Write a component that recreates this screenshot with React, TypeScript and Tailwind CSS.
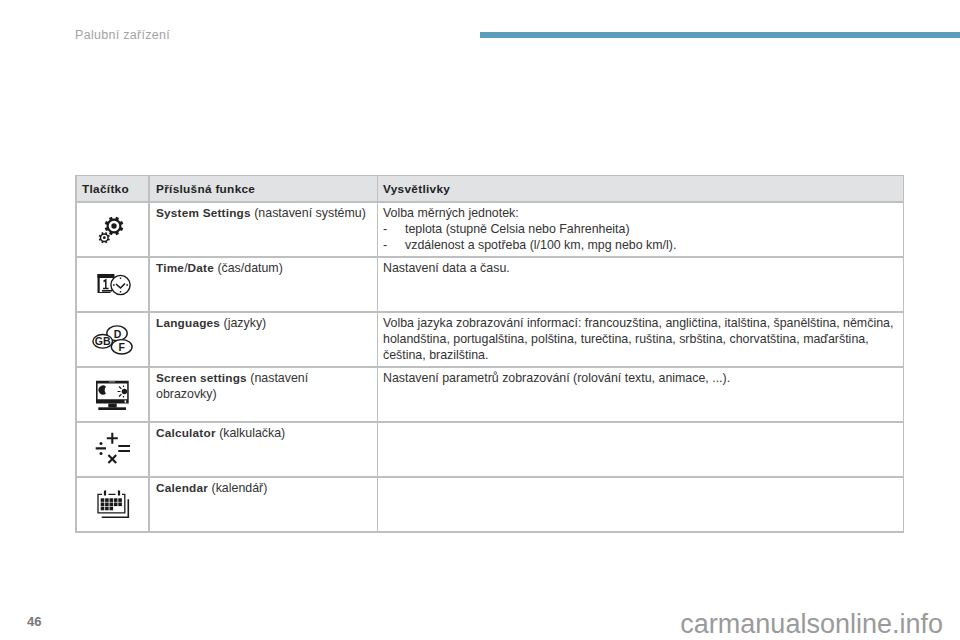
const boldCls = "font-bold text-[11.8px] tracking-[0.2px]";

const rows = [
  {
    icon: <GearsIcon />,
    fn: <><b className={boldCls}>System Settings</b> (nastavení systému)</>,
    desc: (
      <>
        <div>Volba měrných jednotek:</div>
        <div className="flex"><span className="w-[22px]">-</span><span>teplota (stupně Celsia nebo Fahrenheita)</span></div>
        <div className="flex"><span className="w-[22px]">-</span><span>vzdálenost a spotřeba (l/100 km, mpg nebo km/l).</span></div>
      </>
    ),
  },
  {
    icon: <ClockIcon />,
    fn: <><b className={boldCls}>Time</b>/<b className={boldCls}>Date</b> (čas/datum)</>,
    desc: <div>Nastavení data a času.</div>,
  },
  {
    icon: <LangIcon />,
    fn: <><b className={boldCls}>Languages</b> (jazyky)</>,
    desc: (
      <>
        <div>Volba jazyka zobrazování informací: francouzština, angličtina, italština, španělština, němčina,</div>
        <div>holandština, portugalština, polština, turečtina, ruština, srbština, chorvatština, maďarština,</div>
        <div>čeština, brazilština.</div>
      </>
    ),
  },
  {
    icon: <ScreenIcon />,
    fn: <><b className={boldCls}>Screen settings</b> (nastavení<br />obrazovky)</>,
    desc: <div>Nastavení parametrů zobrazování (rolování textu, animace, ...).</div>,
  },
  {
    icon: <CalcIcon />,
    fn: <><b className={boldCls}>Calculator</b> (kalkulačka)</>,
    desc: null,
  },
  {
    icon: <CalendarIcon />,
    fn: <><b className={boldCls}>Calendar</b> (kalendář)</>,
    desc: null,
  },
];

const ink = "#1a1a1a";

// all icons share a 60x50 box
function GearsIcon() {
  const teeth = [0, 45, 90, 135, 180, 225, 270, 315];
  return (
    <svg width="60" height="50" viewBox="0 0 60 50" fill="none" stroke={ink}>
      <circle cx="34" cy="21" r="6.4" strokeWidth="2.2" />
      <circle cx="34" cy="21" r="2.7" fill={ink} stroke="none" />
      {teeth.map((a) => (
        <rect key={a} x="32.4" y="11.6" width="3.2" height="3" fill={ink} stroke="none" transform={`rotate(${a + 22.5} 34 21)`} />
      ))}
      <circle cx="24.3" cy="32.7" r="3.8" strokeWidth="1.5" />
      <circle cx="24.3" cy="32.7" r="1.4" fill={ink} stroke="none" />
      {teeth.map((a) => (
        <rect key={a} x="23.4" y="27" width="1.8" height="1.6" fill={ink} stroke="none" transform={`rotate(${a + 22.5} 24.3 32.7)`} />
      ))}
    </svg>
  );
}

function ClockIcon() {
  return (
    <svg width="60" height="50" viewBox="0 0 60 50" fill="none" stroke={ink}>
      <rect x="17.5" y="14" width="17" height="4" fill={ink} stroke="none" />
      <rect x="17.5" y="14" width="2.2" height="19" fill={ink} stroke="none" />
      <rect x="22" y="30" width="10" height="1.6" fill={ink} stroke="none" />
      <rect x="19.5" y="32" width="11" height="1" fill={ink} stroke="none" />
      <path d="M23.5 21.5 25.8 20v8.6M23 28.6h5.6" strokeWidth="1.5" />
      <circle cx="40.5" cy="25" r="9.6" fill="#fff" strokeWidth="1.4" />
      <path d="M36 24 40.5 28 45 23.5" strokeWidth="1.6" />
      <path d="M40.5 17.5v1.6M40.5 30.9v1.6M33 25h1.6M46.4 25h1.6" strokeWidth="1.4" />
    </svg>
  );
}

function LangIcon() {
  return (
    <svg width="60" height="50" viewBox="0 0 60 50" fill="#fff" stroke={ink} strokeWidth="1.4">
      <ellipse cx="37" cy="18.3" rx="10.2" ry="7.4" />
      <ellipse cx="22.7" cy="26.3" rx="9.8" ry="6.8" />
      <ellipse cx="41.7" cy="31.8" rx="10.4" ry="7.2" />
      <g fill={ink} stroke="none" fontFamily="'Liberation Sans', sans-serif" fontWeight="700" fontSize="10.5" textAnchor="middle">
        <text x="37.5" y="22.5">D</text>
        <text x="22.7" y="30">GB</text>
        <text x="41.7" y="36">F</text>
      </g>
    </svg>
  );
}

function ScreenIcon() {
  return (
    <svg width="60" height="50" viewBox="0 0 60 50">
      <path fillRule="evenodd" d="M16 10.7h32.7V33.5H16zM17.6 13.4V29.3H47.2V13.4z" fill={ink} />
      <rect x="29" y="11.4" width="6" height="1" fill="#999" />
      <rect x="28.3" y="33.5" width="8.4" height="4" fill={ink} />
      <rect x="18.3" y="37.3" width="27.7" height="2.7" fill={ink} />
      <path d="M26 16.4a4.6 4.6 0 1 0 0 7.2 6 6 0 0 1 0-7.2z" fill={ink} />
      <circle cx="44.4" cy="21.5" r="2.7" fill={ink} />
      <path d="M37.5 21.5h3M39 16.5l2.4 2.2M39 26.5l2.4-2.2M43.5 15.5v1.6M43.5 26v1.6" stroke={ink} strokeWidth="1.2" />
      <rect x="44.6" y="30.4" width="1.6" height="2.2" fill="#fff" />
    </svg>
  );
}

function CalcIcon() {
  return (
    <svg width="60" height="50" viewBox="0 0 60 50" stroke={ink} strokeWidth="2.1" fill="none">
      <path d="M15.7 23.4H26M26.8 13.3h11M32.3 7.8v11M38.3 21h11.7M38.3 26h11.7M28.4 30.1l7.8 7.8M36.2 30.1l-7.8 7.8" />
      <circle cx="21" cy="18.4" r="1.5" fill={ink} stroke="none" />
      <circle cx="21" cy="28.4" r="1.5" fill={ink} stroke="none" />
    </svg>
  );
}

function CalendarIcon() {
  const cells = [];
  for (let y = 0; y < 3; y++) {
    for (let x = 0; x < 5; x++) {
      if (y === 2 && x > 2) continue;
      cells.push(<rect key={`${x}-${y}`} x={20.7 + x * 4.4} y={18.3 + y * 4.2} width="3.6" height="3.6" fill={ink} stroke="none" />);
    }
  }
  return (
    <svg width="60" height="50" viewBox="0 0 60 50" fill="none" stroke={ink} strokeWidth="1.3">
      <path d="M22 14.4H18V32.8H44.8V14.4H42M28.5 14.4H35.5" />
      <path d="M48.3 19.3V37.3H21.7" strokeWidth="1.6" />
      <path d="M25 10.5v5M39 10.5v5" strokeWidth="2.2" />
      {cells}
    </svg>
  );
}

export default function App() {
  return (
    <div className="relative w-[960px] h-[640px] overflow-hidden bg-white font-['Liberation_Sans',Arial,sans-serif] text-[#333]">
      <div className="flex items-center justify-between h-[24px] mt-[23px] pl-[75px]">
        <span className="text-[12.5px] tracking-[0.3px] text-[#a3a3a3]">Palubní zařízení</span>
        <div className="w-[480px] h-[6px] bg-[#5b9cb8]" />
      </div>

      <div className="ml-[75px] mt-[128px] w-[829px] border-2 border-[#bdbfc0] border-r border-t text-[12.4px] leading-[16px]">
        <div className="grid grid-cols-[71px_229px_1fr] h-[25px] bg-[#e1e2e4] items-center font-bold text-[11.8px] tracking-[0.3px] text-[#222]">
          <div className="px-[5px]">Tlačítko</div>
          <div className="px-[6px] h-full flex items-center border-l-2 border-[#bdbfc0]">Příslušná funkce</div>
          <div className="px-[5px] h-full flex items-center border-l border-[#bdbfc0]">Vysvětlivky</div>
        </div>
        {rows.map((row, i) => (
          <div key={i} className="grid grid-cols-[71px_229px_1fr] h-[55px] border-t-2 border-[#bdbfc0]">
            <div className="pl-[3px] pt-[2px]">{row.icon}</div>
            <div className="pl-[6px] pr-[4px] pt-[2px] border-l-2 border-[#bdbfc0]">{row.fn}</div>
            <div className="px-[5px] pt-[2px] border-l border-[#bdbfc0]">{row.desc}</div>
          </div>
        ))}
      </div>

      <div className="flex items-start justify-between pl-[27px] pr-[17px] mt-[76px]">
        <span className="mt-[4px] text-[13px] leading-[18px] font-bold text-[#777]">46</span>
        <span className="text-[27px] leading-[30px] text-[#9a9a9a]">carmanualsonline.info</span>
      </div>
    </div>
  );
}
